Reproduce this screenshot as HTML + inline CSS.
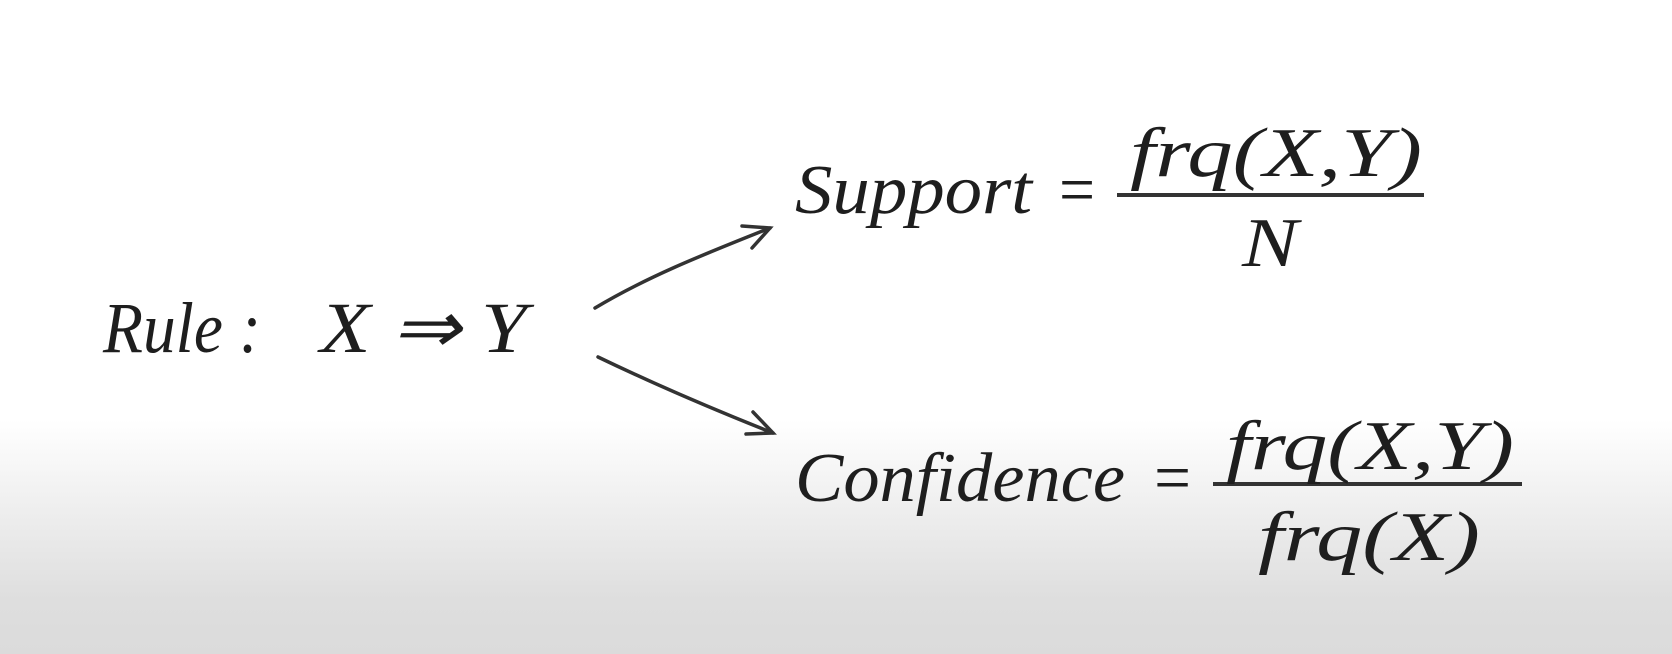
<!DOCTYPE html>
<html><head><meta charset="utf-8"><style>
html,body{margin:0;padding:0}
body{width:1672px;height:654px;overflow:hidden;background:linear-gradient(to bottom,#fff 0,#fff 420px,#f0f0f0 500px,#dedede 600px,#dbdbdb 654px)}
svg{position:absolute;left:0;top:0}
text{font-family:"Liberation Serif",serif;font-style:italic;fill:#1e1e1e}
</style></head><body>
<svg width="1672" height="654" viewBox="0 0 1672 654">
<text x="103" y="352" font-size="72" textLength="158" lengthAdjust="spacingAndGlyphs">Rule :</text>
<text x="320" y="352" font-size="72" textLength="207" lengthAdjust="spacingAndGlyphs">X ⇒ Y</text>
<g stroke="#333" stroke-width="3.5" fill="none" stroke-linecap="round">
<path d="M595 308 C650 275 710 252 770 228"/>
<path d="M742 226 L770 228 L752 248"/>
<path d="M598 357 C650 382 710 408 773 433"/>
<path d="M753 412 L773 433 L746 434"/>
</g>
<text x="795" y="213" font-size="70" textLength="237" lengthAdjust="spacingAndGlyphs">Support</text>
<text x="1055" y="213" font-size="70" font-style="normal" textLength="43" lengthAdjust="spacingAndGlyphs">=</text>
<rect x="1117" y="193" width="307" height="4" fill="#333"/>
<text x="1130" y="176" font-size="70" textLength="292" lengthAdjust="spacingAndGlyphs">frq(X,Y)</text>
<text x="1242" y="266" font-size="70" textLength="56" lengthAdjust="spacingAndGlyphs">N</text>
<text x="795" y="501" font-size="70" textLength="330" lengthAdjust="spacingAndGlyphs">Confidence</text>
<text x="1150" y="501" font-size="70" font-style="normal" textLength="44" lengthAdjust="spacingAndGlyphs">=</text>
<rect x="1213" y="482" width="309" height="4" fill="#333"/>
<text x="1226" y="469" font-size="70" textLength="288" lengthAdjust="spacingAndGlyphs">frq(X,Y)</text>
<text x="1258" y="560" font-size="70" textLength="222" lengthAdjust="spacingAndGlyphs">frq(X)</text>
</svg>
</body></html>
